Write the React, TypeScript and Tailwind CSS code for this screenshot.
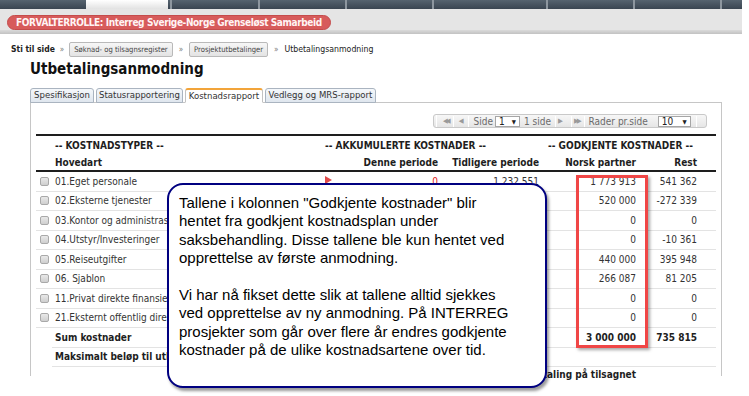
const FONT = "font-['DejaVu_Sans_Condensed','Liberation_Sans',sans-serif]";

const navCells = ["w-[88px]", "w-[87px]", "w-[87px]", "w-[114px]", "w-[87px]", "w-[87px]", "w-[22px]"];

// only the first row shows the accumulated columns, the rest sit under the callout
const rows = [
  ["01.Eget personale", "0", "1 232 551", "1 773 913", "541 362"],
  ["02.Eksterne tjenester", "", "", "520 000", "-272 339"],
  ["03.Kontor og administrasjon", "", "", "0", "0"],
  ["04.Utstyr/Investeringer", "", "", "0", "-10 361"],
  ["05.Reiseutgifter", "", "", "440 000", "395 948"],
  ["06. Sjablon", "", "", "266 087", "81 205"],
  ["11.Privat direkte finansiering", "", "", "0", "0"],
  ["21.Eksternt offentlig direkte finansiering", "", "", "0", "0"],
];

const cols = "grid grid-cols-[304px_98px_101px_97px_61px_19px]";

function Checkbox() {
  return <span className="inline-block w-[9px] h-[9px] shrink-0 rounded-[2px] border border-[#a9a9a9] bg-gradient-to-b from-[#e9e9e9] to-[#cfcfcf]" />;
}

function Pager() {
  const sep = <span className="w-px h-[12px] bg-[#cfcfcf] border-r border-white" />;
  return (
    <div className="flex items-center h-[14px] w-[274px] mr-[9px] rounded-[3px] border border-[#c9c9c9] bg-gradient-to-b from-[#f7f7f7] to-[#e6e6e6] text-[10px] text-[#6b6b6b] pl-[2px] whitespace-nowrap">
      {sep}
      <span className="ml-[6px] text-[7px] tracking-[-2px] text-[#9a9a9a]">◀◀</span>
      <span className="ml-[4px]">{sep}</span>
      <span className="ml-[5px] text-[7px] text-[#9a9a9a]">◀</span>
      <span className="ml-[4px]">{sep}</span>
      <span className="ml-[5px]">Side</span>
      <span className="ml-[2px] flex items-center justify-between h-[11px] w-[25px] border border-[#a6a6a6] bg-white px-[3px] text-[#222]">
        <span>1</span><span className="text-[6px]">▼</span>
      </span>
      <span className="ml-[4px]">1 side</span>
      <span className="ml-[4px]">{sep}</span>
      <span className="ml-[2px] text-[7px] text-[#9a9a9a]">▶</span>
      <span className="ml-[8px]">{sep}</span>
      <span className="ml-[2px] text-[7px] tracking-[-2px] text-[#9a9a9a]">▶▶</span>
      <span className="ml-[4px]">{sep}</span>
      <span className="ml-[4px]">Rader pr.side</span>
      <span className="ml-[10px] flex items-center justify-between h-[11px] w-[33px] border border-[#a6a6a6] bg-white px-[3px] text-[#222]">
        <span>10</span><span className="text-[6px]">▼</span>
      </span>
      <span className="ml-[5px]">{sep}</span>
    </div>
  );
}

export default function App() {
  return (
    <div className={`relative w-[749px] h-[396px] overflow-hidden bg-white ${FONT} text-[10px] text-[#2a2a2a]`}>
      {/* top menu, only lower edge visible */}
      <div className="flex h-[9px] w-[742px] bg-gradient-to-b from-[#56636f] to-[#3a4551]">
        <div className="w-[86px]" />
        <div className="w-[82px] bg-gradient-to-b from-[#ffffff] to-[#e2e2e2]" />
        <div className="w-[2px]" />
        {navCells.map((w, i) => (
          <div key={i} className={`${w} border-l-2 border-[#8d969f]`} />
        ))}
      </div>

      {/* role band */}
      <div className="w-[742px]">
        <div className="h-[21px] bg-[#e5e5e5] pt-[6px] pl-[7px]">
          <div className="inline-flex items-center h-[15px] px-[8px] rounded-full bg-[#d75b5b] border border-[#c44c4c] text-[10px] font-bold text-[#fff4f4] whitespace-nowrap tracking-[-0.4px]">
            FORVALTERROLLE: Interreg Sverige-Norge Grenseløst Samarbeid
          </div>
        </div>
        <div className="h-[4px] bg-gradient-to-b from-[#dadada] to-[#c2c2c2]" />
      </div>

      {/* breadcrumb */}
      <div className="flex items-center h-[15px] mt-[8px] pl-[11px] text-[7.6px] text-[#222] whitespace-nowrap">
        <span className="font-bold text-[8.5px]">Sti til side</span>
        <span className="mx-[5px] text-[#777] text-[8px]">»</span>
        <span className="flex items-center h-[15px] px-[4px] rounded-[2px] border border-[#b9b9b9] bg-gradient-to-b from-[#f7f7f7] to-[#e3e3e3] text-[#444]">Søknad- og tilsagnsregister</span>
        <span className="mx-[6px] text-[#777] text-[8px]">»</span>
        <span className="flex items-center h-[15px] px-[4px] rounded-[2px] border border-[#b9b9b9] bg-gradient-to-b from-[#f7f7f7] to-[#e3e3e3] text-[#444]">Prosjektutbetalinger</span>
        <span className="mx-[6px] text-[#777] text-[8px]">»</span>
        <span className="text-[8.7px]">Utbetalingsanmodning</span>
      </div>

      {/* title */}
      <div className="mt-[3px] pl-[30px] h-[18px] text-[15px] leading-[18px] font-bold text-[#111]">Utbetalingsanmodning</div>

      {/* tabs */}
      <div className="relative z-10 flex gap-[2px] mt-[10px] pl-[30px] h-[15px] -mb-px text-[9.5px] whitespace-nowrap">
        <div className="w-[64px] flex items-center justify-center rounded-t-[3px] border border-[#aab4c0] bg-gradient-to-b from-[#f5f8fb] to-[#dfe6ee] text-[#333]">Spesifikasjon</div>
        <div className="w-[87px] flex items-center justify-center rounded-t-[3px] border border-[#aab4c0] bg-gradient-to-b from-[#f5f8fb] to-[#dfe6ee] text-[#333]">Statusrapportering</div>
        <div className="w-[78px] flex items-center justify-center rounded-t-[3px] border border-[#c2c2c2] border-t-2 border-t-[#f2a43a] border-b-white bg-white text-[#333]">Kostnadsrapport</div>
        <div className="w-[111px] flex items-center justify-center rounded-t-[3px] border border-[#aab4c0] bg-gradient-to-b from-[#f5f8fb] to-[#dfe6ee] text-[#333]">Vedlegg og MRS-rapport</div>
      </div>

      {/* panel */}
      <div className="ml-[30px] w-[692px] h-[274px] border-x border-t border-[#c6c6c6] px-[5px]">
        <div className="flex justify-end mt-[11px]">
          <Pager />
        </div>

        <div className="mt-[6px] border-t-2 border-[#1e1e1e]">
          <div className="flex h-[18px] items-center font-bold text-[#1e1e1e] whitespace-nowrap">
            <div className="w-[289px] pl-[19px]">-- KOSTNADSTYPER --</div>
            <div className="w-[223px]">-- AKKUMULERTE KOSTNADER --</div>
            <div>-- GODKJENTE KOSTNADER --</div>
          </div>
          <div className={`${cols} h-[18px] items-center font-bold text-[#1e1e1e] whitespace-nowrap border-b-2 border-[#1e1e1e]`}>
            <div className="pl-[19px]">Hovedart</div>
            <div className="text-right">Denne periode</div>
            <div className="text-right">Tidligere periode</div>
            <div className="text-right">Norsk partner</div>
            <div className="text-right">Rest</div>
            <div />
          </div>

          {rows.map((r, i) => (
            <div key={i} className={`${cols} h-[19.5px] items-center border-b border-[#e3e3e3] whitespace-nowrap text-[#333]`}>
              <div className="flex items-center justify-between h-full pl-[4px] overflow-hidden">
                <span className="flex items-center gap-[6px]">
                  <Checkbox />
                  <span>{r[0]}</span>
                </span>
                {i === 0 && (
                  <span className="self-start mt-[4px] mr-[8px] w-0 h-0 border-y-[4px] border-y-transparent border-l-[7px] border-l-[#e04b4b]" />
                )}
              </div>
              <div className={`text-right ${i === 0 ? "text-[#e02020]" : ""}`}>{r[1]}</div>
              <div className="text-right">{r[2]}</div>
              <div className="text-right">{r[3]}</div>
              <div className="text-right">{r[4]}</div>
              <div />
            </div>
          ))}

          <div className="ml-[16px] grid grid-cols-[288px_98px_101px_97px_61px_19px] h-[19.5px] items-center border-b border-[#e3e3e3] font-bold text-[#1e1e1e] whitespace-nowrap">
            <div className="pl-[3px]">Sum kostnader</div>
            <div />
            <div />
            <div className="text-right">3 000 000</div>
            <div className="text-right">735 815</div>
            <div />
          </div>
          <div className="ml-[16px] h-[19.5px] flex items-center border-b border-[#e3e3e3] font-bold text-[#1e1e1e] whitespace-nowrap">
            <div className="pl-[3px]">Maksimalt beløp til utbetaling</div>
          </div>
          <div className="flex h-[14px] items-center font-bold text-[#1e1e1e] whitespace-nowrap">
            <div className="w-[600px] text-right">Gjenstående til utbetaling på tilsagnet</div>
          </div>
        </div>
      </div>

      {/* highlight around approved costs */}
      <div className="absolute left-[576px] top-[175px] w-[72px] h-[173px] border-[3px] border-[#f04646] shadow-[2px_2px_3px_rgba(0,0,0,0.35)]" />

      {/* callout */}
      <div className="absolute left-[167px] top-[183px] w-[380px] h-[205px] rounded-[16px] border-2 border-[#000080] bg-white pl-[10px] pt-[9px] shadow-[2px_3px_3px_rgba(0,0,0,0.4)] font-['Liberation_Sans',Arial,sans-serif] text-[15px] leading-[18.4px] text-black whitespace-nowrap">
        <div>Tallene i kolonnen "Godkjente kostnader" blir</div>
        <div>hentet fra godkjent kostnadsplan under</div>
        <div>saksbehandling. Disse tallene ble kun hentet ved</div>
        <div>opprettelse av første anmodning.</div>
        <div className="h-[18.4px]" />
        <div>Vi har nå fikset dette slik at tallene alltid sjekkes</div>
        <div>ved opprettelse av ny anmodning. På INTERREG</div>
        <div>prosjekter som går over flere år endres godkjente</div>
        <div>kostnader på de ulike kostnadsartene over tid.</div>
      </div>
    </div>
  );
}
